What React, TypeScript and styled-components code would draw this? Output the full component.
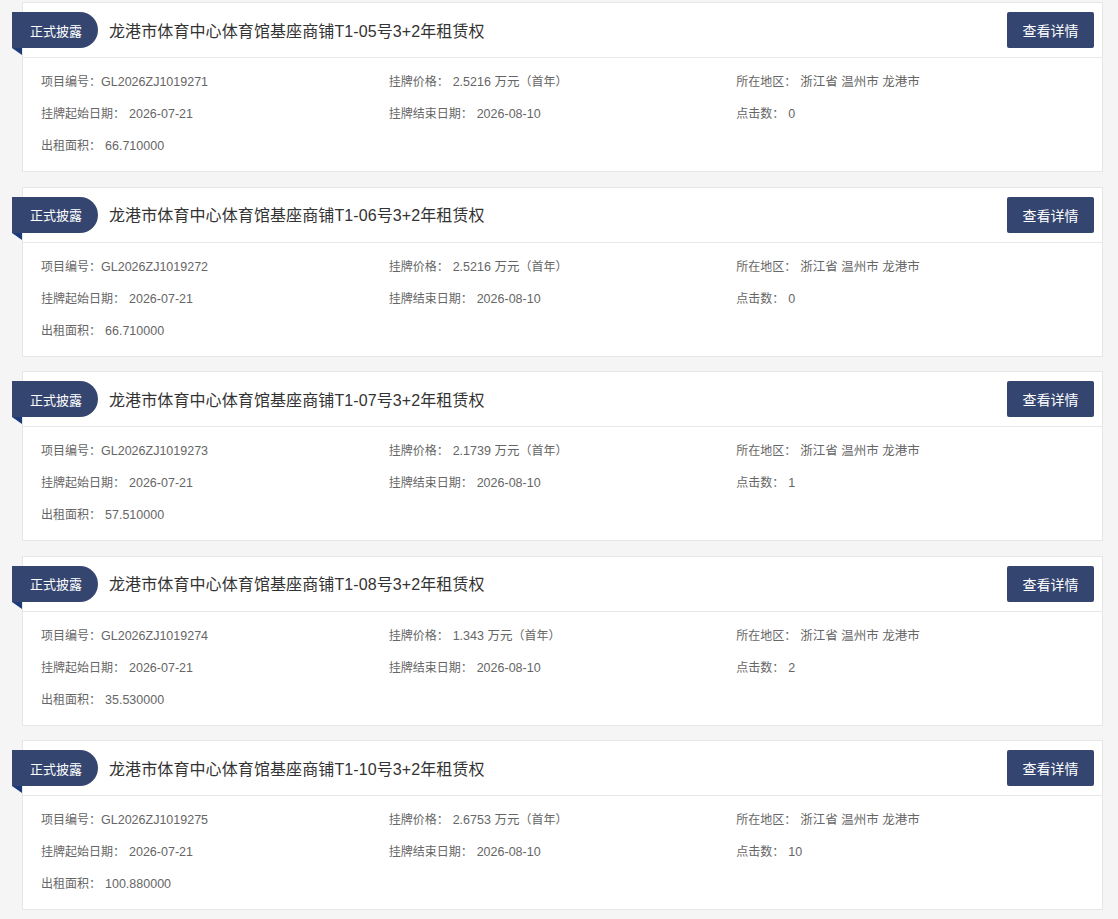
import styled, { createGlobalStyle } from "styled-components";

const GlobalStyle = createGlobalStyle`
  html, body {
    margin: 0;
    padding: 0;
    background: #f5f5f5;
    font-family: "Liberation Sans", Arial, "Noto Sans CJK SC", sans-serif;
  }
`;

const List = styled.div`
  padding: 2px 15px 0 22px;
`;

const Card = styled.div`
  background: #fff;
  border: 1px solid #e6e6e6;
  margin-bottom: 14.5px;
`;

const Header = styled.div`
  height: 54px;
  display: flex;
  align-items: center;
  border-bottom: 1px solid #e8e8e8;
  padding-right: 8px;
`;

const Badge = styled.div`
  position: relative;
  margin-left: -11px;
  height: 36px;
  width: 86px;
  box-sizing: border-box;
  padding-left: 18px;
  display: flex;
  align-items: center;
  background: #34466f;
  color: #fff;
  font-size: 13px;
  border-radius: 0 18px 18px 0;

  &::after {
    content: "";
    position: absolute;
    left: 0;
    top: 100%;
    width: 0;
    height: 0;
    border-top: 7px solid #1d3a78;
    border-left: 10px solid transparent;
  }
`;

const Title = styled.div`
  flex: 1;
  margin-left: 11px;
  margin-bottom: 1px;
  font-size: 16px;
  letter-spacing: 0.1px;
  color: #333;
`;

const DetailButton = styled.button`
  width: 87px;
  height: 36px;
  border: none;
  border-radius: 2px;
  background: #34466f;
  color: #fff;
  font-family: inherit;
  font-size: 14px;
  cursor: pointer;
`;

const Body = styled.div`
  display: grid;
  grid-template-columns: repeat(3, 1fr);
  padding: 8px 18px 9px;
  font-size: 12px;
  line-height: 32px;
  color: #666;
`;

const Field = styled.div`
  white-space: nowrap;
`;

const Value = styled.span<{ $gap?: boolean }>`
  font-size: 12.5px;
  margin-left: ${(p) => (p.$gap ? "4px" : "0")};
`;

type Item = {
  lot: string;
  code: string;
  price: string;
  clicks: number;
  area: string;
};

const items: Item[] = [
  { lot: "T1-05", code: "GL2026ZJ1019271", price: "2.5216", clicks: 0, area: "66.710000" },
  { lot: "T1-06", code: "GL2026ZJ1019272", price: "2.5216", clicks: 0, area: "66.710000" },
  { lot: "T1-07", code: "GL2026ZJ1019273", price: "2.1739", clicks: 1, area: "57.510000" },
  { lot: "T1-08", code: "GL2026ZJ1019274", price: "1.343", clicks: 2, area: "35.530000" },
  { lot: "T1-10", code: "GL2026ZJ1019275", price: "2.6753", clicks: 10, area: "100.880000" },
];

export default function App() {
  return (
    <>
      <GlobalStyle />
      <List>
        {items.map((it) => (
          <Card key={it.code}>
            <Header>
              <Badge>正式披露</Badge>
              <Title>龙港市体育中心体育馆基座商铺{it.lot}号3+2年租赁权</Title>
              <DetailButton>查看详情</DetailButton>
            </Header>
            <Body>
              <Field>
                项目编号：<Value>{it.code}</Value>
              </Field>
              <Field>
                挂牌价格：<Value $gap>{it.price} 万元</Value>（首年）
              </Field>
              <Field>
                所在地区：<Value $gap>浙江省 温州市 龙港市</Value>
              </Field>
              <Field>
                挂牌起始日期：<Value $gap>2026-07-21</Value>
              </Field>
              <Field>
                挂牌结束日期：<Value $gap>2026-08-10</Value>
              </Field>
              <Field>
                点击数：<Value $gap>{it.clicks}</Value>
              </Field>
              <Field>
                出租面积：<Value $gap>{it.area}</Value>
              </Field>
            </Body>
          </Card>
        ))}
      </List>
    </>
  );
}
